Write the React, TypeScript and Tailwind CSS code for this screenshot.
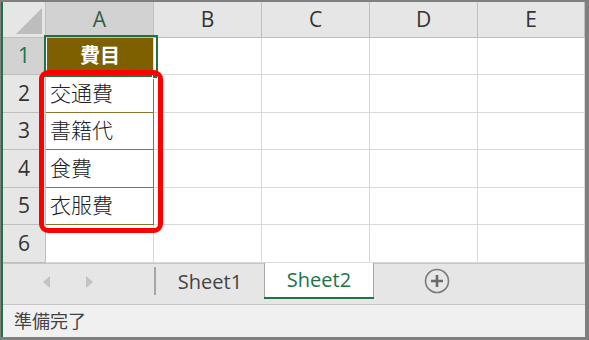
import React from 'react';

const FONT = { fontFamily: '"Open Sans", "Noto Sans CJK JP", sans-serif' };

const cols = ['A', 'B', 'C', 'D', 'E'];
const colW = ['w-[108px]', 'w-[108px]', 'w-[108px]', 'w-[108px]', 'w-[107px]'];
const rowH = ['h-[37px]', 'h-[38px]', 'h-[37px]', 'h-[38px]', 'h-[37px]', 'h-[38px]'];
const values = ['費目', '交通費', '書籍代', '食費', '衣服費', ''];

export default function App() {
  return (
    <div
      className="w-[589px] h-[340px] bg-[#7f7f7f] pt-[2px] pr-[4px] pb-[3px] pl-[1px]"
      style={FONT}
    >
      <div className="w-full h-full border-l-2 border-[#217346] flex flex-col bg-white">
        {/* grid */}
        <div className="relative flex flex-col">
          {/* column header */}
          <div className="flex h-[36px]">
            <div className="w-[43px] h-full bg-[#e6e6e6] border-r border-b border-[#bfbfbf] relative">
              <svg className="absolute left-[13px] top-[6px]" width="26" height="26" viewBox="0 0 26 26">
                <polygon points="26,0 26,26 0,26" fill="#bdbdbd" />
              </svg>
            </div>
            {cols.map((c, i) => (
              <div
                key={c}
                className={`${colW[i]} h-full flex items-center justify-center border-r border-b border-[#bfbfbf] text-[21px] ${
                  i === 0 ? 'bg-[#d2d2d2] text-[#2f5e4a]' : 'bg-[#e6e6e6] text-[#333]'
                }`}
              >
                {c}
              </div>
            ))}
          </div>
          {/* rows */}
          {rowH.map((h, r) => (
            <div key={r} className={`flex ${h}`}>
              <div
                className={`w-[43px] h-full flex items-center justify-center border-r border-b border-[#bfbfbf] text-[21px] ${
                  r === 0 ? 'bg-[#d2d2d2] text-[#217346]' : 'bg-[#e6e6e6] text-[#333]'
                }`}
              >
                {r + 1}
              </div>
              {cols.map((c, i) => {
                if (i === 0 && r === 0) {
                  return (
                    <div key={c} className={`${colW[i]} h-full relative border-r border-b border-[#d9d9d9]`}>
                      <div className="absolute left-[1px] top-0 right-0 bottom-0 bg-[#7f6000] flex items-center justify-center text-white font-bold text-[20px]">
                        {values[r]}
                      </div>
                      <div className="absolute left-[-2px] top-[-3px] w-[114px] h-[42px] border-2 border-[#217346]" />
                      <div className="absolute left-[106px] top-[35px] w-[6px] h-[6px] bg-[#217346] border border-white" />
                    </div>
                  );
                }
                const olive = i === 0 && r >= 1 && r <= 4;
                return (
                  <div
                    key={c}
                    className={`${colW[i]} h-full flex items-center pl-[4px] text-[21px] font-light text-[#222] ${
                      olive ? 'border-r border-b border-[#8c7430]' : 'border-r border-b border-[#d9d9d9]'
                    }`}
                  >
                    {i === 0 ? values[r] : ''}
                  </div>
                );
              })}
            </div>
          ))}
          {/* red highlight */}
          <div className="absolute left-[36px] top-[68px] w-[124px] h-[163px] border-[5px] border-[#ff0000] rounded-[9px] pointer-events-none" />
        </div>

        {/* sheet tabs */}
        <div className="h-[42px] flex bg-[#e6e6e6] border-b border-[#c6c6c6]">
          <div className="w-[151px] h-full flex items-center border-t border-[#c6c6c6]">
            <svg className="ml-[40px] mb-[4px]" width="8" height="12" viewBox="0 0 8 12">
              <polygon points="7,0 7,12 0,6" fill="#c4c4c4" />
            </svg>
            <svg className="ml-[34px] mb-[4px]" width="8" height="12" viewBox="0 0 8 12">
              <polygon points="1,0 1,12 8,6" fill="#c4c4c4" />
            </svg>
          </div>
          <div className="w-[110px] h-full border-t border-[#c6c6c6] flex items-center">
            <div className="w-[2px] h-[28px] bg-[#a6a6a6] mb-[6px]" />
            <div className="flex-1 text-center text-[20px] text-[#444] pb-[4px]">Sheet1</div>
          </div>
          <div className="w-[110px] h-full flex flex-col">
            <div className="flex-1 bg-white border-l border-r border-[#a6a6a6] flex items-center justify-center text-[20px] text-[#217346]">
              Sheet2
            </div>
            <div className="h-[2px] bg-[#217346]" />
            <div className="h-[5px]" />
          </div>
          <div className="flex-1 h-full border-t border-[#c6c6c6] flex items-center">
            <svg className="ml-[50px] mb-[6px]" width="26" height="26" viewBox="0 0 26 26">
              <circle cx="13" cy="13" r="11.5" fill="none" stroke="#7a7a7a" strokeWidth="1.6" />
              <path d="M13 7 V19 M7 13 H19" stroke="#6a6a6a" strokeWidth="2.6" />
            </svg>
          </div>
        </div>

        {/* status bar */}
        <div className="flex-1 bg-[#f0f0f0] flex items-center pl-[11px] text-[18px] text-[#444]">
          準備完了
        </div>
      </div>
    </div>
  );
}
